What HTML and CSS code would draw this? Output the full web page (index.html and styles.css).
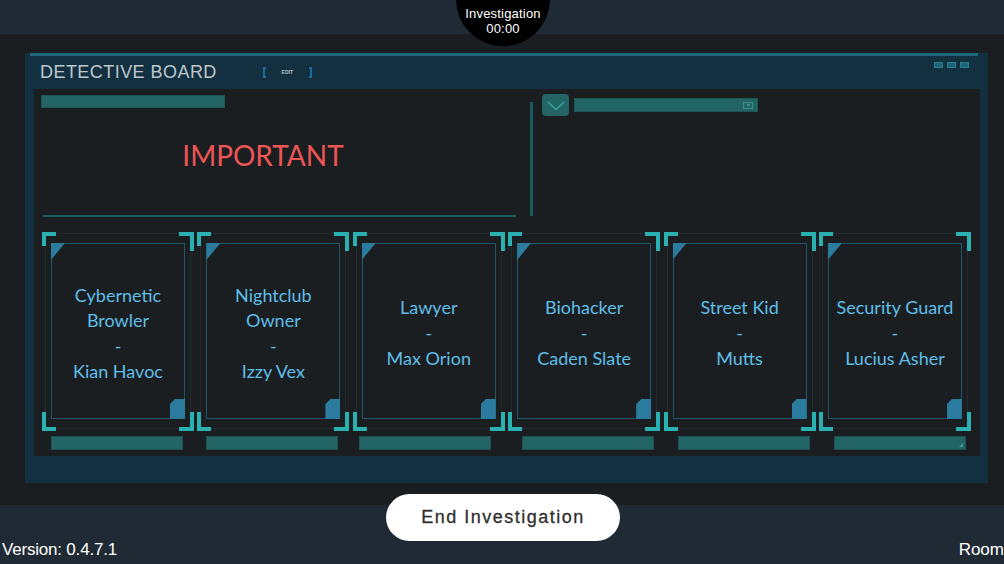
FILE: index.html
```html
<!DOCTYPE html>
<html lang="en">
<head>
<meta charset="utf-8">
<title>Detective Board</title>
<link rel="stylesheet" href="styles.css">
</head>
<body>
<header class="topbar"></header>
<div class="timer"><span>Investigation</span><span>00:00</span></div>

<main class="stage">
  <section class="board">
    <div class="board-head">
      <h1 class="title">DETECTIVE BOARD</h1>
      <div class="edit"><span class="brk brk-l"></span><span class="edit-t">EDIT</span><span class="brk brk-r"></span></div>
      <div class="win-btns"><i></i><i></i><i></i></div>
    </div>
    <div class="panel">
      <div class="top">
        <div class="notes">
          <div class="bar"></div>
          <div class="important">IMPORTANT</div>
          <div class="rule"></div>
        </div>
        <div class="vdiv"></div>
        <div class="side">
          <button class="drop" type="button" aria-label="Toggle">
            <svg width="27" height="22" viewBox="0 0 27 22"><polyline points="6,8 14,15.5 22,8" fill="none" stroke="#3aa7a8" stroke-width="1.3"/></svg>
          </button>
          <div class="bar bar-2"><span class="mini"><i></i></span></div>
        </div>
      </div>

      <div class="cards">
        <div class="slot">
          <div class="frame">
            <span class="bk bk-tl"></span><span class="bk bk-tr"></span><span class="bk bk-bl"></span><span class="bk bk-br"></span>
            <div class="outline"><div class="card"><span class="tri"></span><span class="notch"></span>
              <p class="role">Cybernetic Browler</p><p>-</p><p>Kian Havoc</p></div></div>
          </div>
          <div class="slot-bar"></div>
        </div>
        <div class="slot">
          <div class="frame">
            <span class="bk bk-tl"></span><span class="bk bk-tr"></span><span class="bk bk-bl"></span><span class="bk bk-br"></span>
            <div class="outline"><div class="card"><span class="tri"></span><span class="notch"></span>
              <p class="role">Nightclub Owner</p><p>-</p><p>Izzy Vex</p></div></div>
          </div>
          <div class="slot-bar"></div>
        </div>
        <div class="slot">
          <div class="frame">
            <span class="bk bk-tl"></span><span class="bk bk-tr"></span><span class="bk bk-bl"></span><span class="bk bk-br"></span>
            <div class="outline"><div class="card"><span class="tri"></span><span class="notch"></span>
              <p class="role">Lawyer</p><p>-</p><p>Max Orion</p></div></div>
          </div>
          <div class="slot-bar slot-bar-in"></div>
        </div>
        <div class="slot">
          <div class="frame">
            <span class="bk bk-tl"></span><span class="bk bk-tr"></span><span class="bk bk-bl"></span><span class="bk bk-br"></span>
            <div class="outline"><div class="card"><span class="tri"></span><span class="notch"></span>
              <p class="role">Biohacker</p><p>-</p><p>Caden Slate</p></div></div>
          </div>
          <div class="slot-bar slot-bar-out"></div>
        </div>
        <div class="slot">
          <div class="frame">
            <span class="bk bk-tl"></span><span class="bk bk-tr"></span><span class="bk bk-bl"></span><span class="bk bk-br"></span>
            <div class="outline"><div class="card"><span class="tri"></span><span class="notch"></span>
              <p class="role">Street Kid</p><p>-</p><p>Mutts</p></div></div>
          </div>
          <div class="slot-bar slot-bar-out"></div>
        </div>
        <div class="slot">
          <div class="frame">
            <span class="bk bk-tl"></span><span class="bk bk-tr"></span><span class="bk bk-bl"></span><span class="bk bk-br"></span>
            <div class="outline"><div class="card"><span class="tri"></span><span class="notch"></span>
              <p class="role">Security Guard</p><p>-</p><p>Lucius Asher</p></div></div>
          </div>
          <div class="slot-bar slot-bar-out slot-bar-last"></div>
        </div>
      </div>
    </div>
  </section>
</main>

<footer class="bottombar">
  <span class="version">Version: 0.4.7.1</span>
  <span class="room">Room</span>
</footer>
<button class="end" type="button">End Investigation</button>
</body>
</html>
```

FILE: styles.css
```css
* { box-sizing: border-box; margin: 0; padding: 0; }

html, body { width: 1004px; height: 564px; overflow: hidden; }

body {
  position: relative;
  background: #1b1e21;
  font-family: "Liberation Sans", Arial, sans-serif;
}

.topbar { height: 34px; background: #1f2a34; }

.timer {
  position: absolute;
  left: 456px;
  top: -48px;
  width: 94px;
  height: 94px;
  border-radius: 50%;
  background: #000;
  color: #fff;
  display: flex;
  flex-direction: column;
  justify-content: flex-end;
  align-items: center;
  padding-bottom: 10px;
  font-size: 13px;
  line-height: 15px;
  letter-spacing: 0.2px;
}

.stage { height: 471px; padding: 19px 0 0 25px; }

.board {
  width: 963px;
  height: 430px;
  background: #133041;
  display: flex;
  flex-direction: column;
}

.board-head {
  height: 36px;
  margin: 0 10px 0 5px;
  border-top: 3px solid #1f6a78;
  padding: 7px 0 0 10px;
  display: flex;
  align-items: flex-start;
}

.title {
  font-size: 18px;
  line-height: 18px;
  font-weight: normal;
  letter-spacing: 0.45px;
  color: #bec7cc;
  white-space: nowrap;
}

.edit {
  margin: 4px 0 0 46px;
  display: flex;
  align-items: center;
  height: 11px;
}
.brk { width: 3px; height: 11px; border: 2px solid #1d6b9a; }
.brk-l { border-right: none; }
.brk-r { border-left: none; }
.edit-t {
  width: 43px;
  text-align: center;
  font-size: 5px;
  line-height: 5px;
  color: #b8c0c4;
  font-weight: bold;
}

.win-btns { margin: -1px 9px 0 auto; display: flex; gap: 4px; }
.win-btns i {
  display: block;
  width: 9px;
  height: 6px;
  background: #1e6676;
  border: 1px solid #267f8e;
}

.panel {
  margin-left: 9px;
  width: 946px;
  height: 367px;
  background: #1b1e21;
  padding: 6px 0 0 7px;
}

.top { display: flex; height: 122px; }

.notes { width: 475px; display: flex; flex-direction: column; }

.bar {
  width: 184px;
  height: 13px;
  background: #236465;
  border: 1px solid #1d5657;
}

.important {
  width: 444px;
  margin-top: 33px;
  text-align: center;
  font-family: Lato, "Noto Sans", sans-serif;
  font-size: 28px;
  line-height: 28px;
  color: #ee5555;
}

.rule {
  margin: auto 0 0 2px;
  width: 473px;
  height: 2px;
  background: #1a5a60;
}

.vdiv { width: 3px; margin: 7px 0 1px 14px; background: #1a5a60; }

.side { margin-left: 9px; display: flex; align-items: flex-start; gap: 5px; }

.drop {
  width: 27px;
  height: 22px;
  margin-top: -1px;
  border: none;
  border-radius: 4px;
  background: #236465;
  display: grid;
  place-items: center;
}
.drop svg { display: block; }

.bar-2 {
  height: 14px;
  margin-top: 3px;
  display: flex;
  justify-content: flex-end;
  align-items: center;
  padding-right: 4px;
}
.mini {
  width: 10px;
  height: 7px;
  border: 1px solid #3a8e90;
  display: grid;
  place-items: center;
}
.mini i { display: block; width: 3px; height: 2px; background: #3a8e90; }

.cards {
  display: grid;
  grid-template-columns: repeat(6, 152px);
  column-gap: 3.4px;
  margin: 15px 0 0 1px;
}

.frame { position: relative; height: 199px; padding: 1px 3px 2px 3px; }

.bk { position: absolute; border: 0 solid #2bb1b1; }
.bk-tl { left: 0; top: 0; width: 14px; height: 14px; border-left-width: 4.5px; border-top-width: 4.5px; }
.bk-tr { right: 0; top: 0; width: 15px; height: 19px; border-right-width: 4.5px; border-top-width: 4.5px; }
.bk-bl { left: 0; bottom: 0; width: 14px; height: 19px; border-left-width: 4.5px; border-bottom-width: 4.5px; }
.bk-br { right: 0; bottom: 0; width: 15px; height: 19px; border-right-width: 4.5px; border-bottom-width: 4.5px; }

.outline {
  height: 100%;
  border: 1px solid #232a2e;
  padding: 9px 5px 9px 5px;
}

.card {
  position: relative;
  height: 100%;
  border: 1px solid #1f566b;
  display: flex;
  flex-direction: column;
  justify-content: center;
  align-items: center;
  text-align: center;
  padding: 5px 2px 0;
  font-family: Lato, "Noto Sans", sans-serif;
  font-size: 18px;
  line-height: 25.5px;
  color: #5fbfe8;
}

.tri {
  position: absolute;
  left: -1px;
  top: -1px;
  width: 14px;
  height: 17px;
  background: #2b7b9e;
  clip-path: polygon(0 0, 100% 0, 0 100%);
}

.notch {
  position: absolute;
  right: -1px;
  bottom: -1px;
  width: 15px;
  height: 20px;
  background: #2b7b9e;
  clip-path: polygon(5px 0, 100% 0, 100% 100%, 0 100%, 0 5px);
}

.slot-bar {
  position: relative;
  margin: 5px 0 0 9px;
  width: 132px;
  height: 14px;
  background: #236465;
  border: 1px solid #1c5253;
}
.slot-bar-in { margin-left: 6px; }
.slot-bar-out { margin-left: 14px; }
.slot-bar-last { margin-left: 15px; }
.slot-bar-last::after {
  content: "";
  position: absolute;
  right: 2px;
  bottom: 2px;
  width: 4px;
  height: 4px;
  background: #3a9a9a;
  clip-path: polygon(100% 0, 100% 100%, 0 100%);
}

.bottombar {
  height: 59px;
  background: #1f2a34;
  display: flex;
  justify-content: space-between;
  padding-top: 36px;
  font-size: 17px;
  line-height: 17px;
  color: #fff;
}
.version { padding-left: 2px; letter-spacing: -0.2px; }
.room { margin-right: 0; }

.end {
  position: absolute;
  left: 386px;
  top: 494px;
  width: 234px;
  height: 47px;
  border: none;
  border-radius: 24px;
  background: #fff;
  color: #2f2f2f;
  font-family: "Liberation Sans", Arial, sans-serif;
  font-size: 18px;
  letter-spacing: 1.5px;
  -webkit-text-stroke: 0.3px #2f2f2f;
}
```
